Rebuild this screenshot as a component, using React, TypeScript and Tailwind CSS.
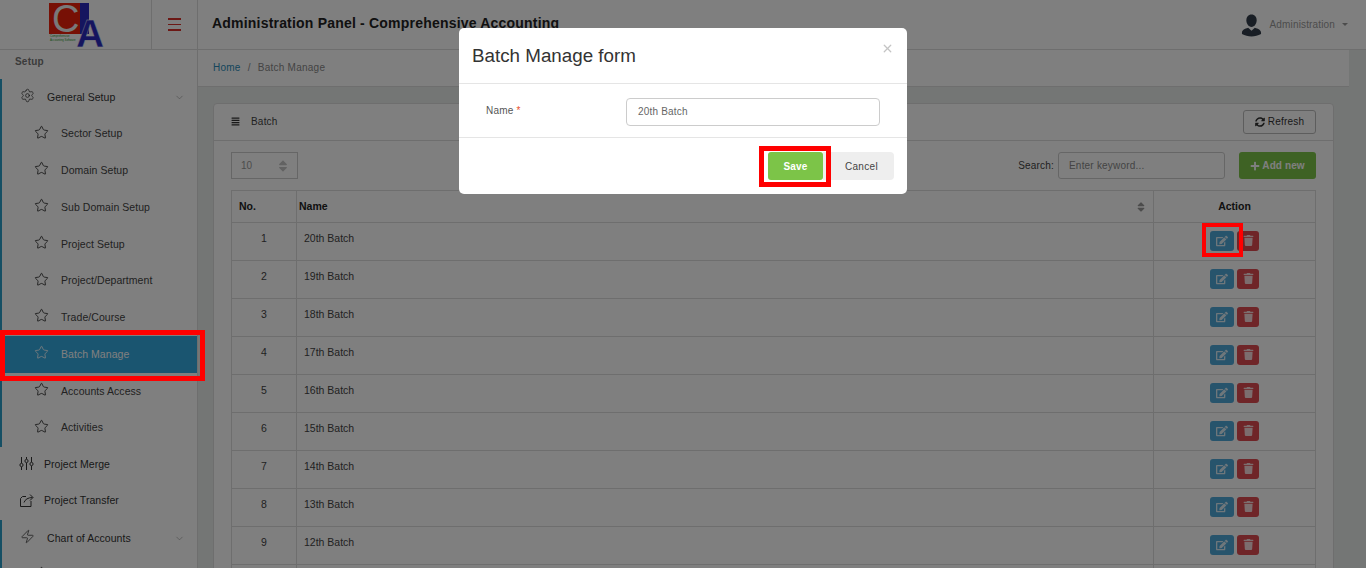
import { ChevronDown, Settings, Star, Zap, X } from "lucide-react";
import { FaAlignJustify, FaEdit, FaPlus, FaSort, FaSyncAlt, FaTrash } from "react-icons/fa";

const subItems = ["Sector Setup", "Domain Setup", "Sub Domain Setup", "Project Setup", "Project/Department", "Trade/Course", "Batch Manage", "Accounts Access", "Activities"];
const batches = ["20th Batch", "19th Batch", "18th Batch", "17th Batch", "16th Batch", "15th Batch", "14th Batch", "13th Batch", "12th Batch", "11th Batch"];

function Logo() {
  return (
    <svg width="60" height="49" viewBox="0 0 60 49" className="block">
      <rect x="1" y="3" width="31" height="31" fill="#ef200a" />
      <rect x="32" y="3" width="9" height="31" fill="#2b2bbf" />
      <text x="4" y="32" fontSize="38" fontFamily="Liberation Sans" fill="#f2f2f2">C</text>
      <text x="28" y="47" fontSize="39" fontFamily="Liberation Sans" fontWeight="700" fill="#2b2bbf" stroke="#fff" strokeWidth="0.4">A</text>
      <text x="2" y="37" fontSize="2.8" fontFamily="Liberation Sans" fill="#2a9a2a">Comprehensive</text>
      <text x="2" y="41" fontSize="2.8" fontFamily="Liberation Sans" fill="#2a9a2a">Accounting Software</text>
    </svg>
  );
}

function NavStar({ label, active }: { label: string; active?: boolean }) {
  return (
    <div className={"flex h-[36.75px] items-center pl-[29px] " + (active ? "ml-[3px] bg-[#34aae0] text-white" : "ml-[3px] text-[#444]")}>
      <Star size={15} strokeWidth={1.3} className={"mb-[4px] shrink-0 " + (active ? "text-white" : "text-[#222]")} />
      <span className="ml-[12px] text-[10.5px] tracking-[0.05px]">{label}</span>
    </div>
  );
}

export default function App() {
  return (
    <div className="relative h-[568px] overflow-hidden bg-[#e8ecea] text-[#333] [font-family:'Liberation_Sans',Arial,sans-serif]">
      {/* top bar */}
      <header className="flex h-[50px] border-b border-[#dcdcdc] bg-white">
        <div className="flex w-[152px] shrink-0 justify-end border-r border-[#dcdcdc] pr-[43px]">
          <Logo />
        </div>
        <div className="flex w-[46px] shrink-0 flex-col items-center justify-center gap-[4px] border-r border-[#dcdcdc]">
          <span className="h-[1.5px] w-[13px] bg-[#d8302a]" />
          <span className="h-[1.5px] w-[13px] bg-[#d8302a]" />
          <span className="h-[1.5px] w-[13px] bg-[#d8302a]" />
        </div>
        <div className="flex flex-1 items-center pl-[14px] pb-[2px] text-[14px] font-bold tracking-[0.2px] text-[#222]">
          Administration Panel - Comprehensive Accounting
        </div>
        <div className="flex items-center pr-[18px]">
          <svg width="21" height="24" viewBox="0 0 22 24" className="mr-[8px]">
            <path d="M11 1c3.4 0 5.4 2.600 5.4 6s-2.200 7-5.400 7-5.400-3.600-5.400-7 2-6 5.400-6z" fill="#333d4a" />
            <path d="M1 20c0-3 3-4 6.500-5.200L11 18l3.500-3.200C18 16 21 17 21 20v1.500C18 23.300 14.500 24 11 24S4 23.300 1 21.500z" fill="#333d4a" />
          </svg>
          <span className="text-[10px] tracking-[0.15px] text-[#999]">Administration</span>
          <span className="ml-[7px] h-0 w-0 border-x-[3px] border-t-[3px] border-x-transparent border-t-[#999]" />
        </div>
      </header>

      <div className="flex">
        {/* sidebar */}
        <aside className="h-[518px] w-[198px] shrink-0 overflow-hidden border-r border-[#dcdcdc] bg-white">
          <div className="h-[29px] pl-[15px] pt-[4px] text-[10px] font-bold tracking-[0.2px] text-[#777]">Setup</div>
          <div className="border-l-2 border-[#2a9fc9]">
            <div className="flex h-[36.75px] items-center pl-[18px] text-[#333]">
              <Settings size={15} strokeWidth={1.2} className="mb-[3px] shrink-0" />
              <span className="ml-[12px] flex-1 text-[10.5px] tracking-[0.05px]">General Setup</span>
              <ChevronDown size={11} strokeWidth={1.2} className="mr-[12px] text-[#888]" />
            </div>
            {subItems.map((s) => (
              <NavStar key={s} label={s} active={s === "Batch Manage"} />
            ))}
          </div>
          <div className="flex h-[36.75px] items-center pl-[19px] text-[#333]">
            <svg width="15" height="15" viewBox="0 0 15 15" fill="none" stroke="currentColor" strokeWidth="1" className="mb-[3px] shrink-0">
              <path d="M2.500 1v6M2.500 11v3M7.500 1v2M7.500 7v7M12.500 1v5M12.500 10v4" />
              <circle cx="2.500" cy="9" r="1.600" />
              <circle cx="7.500" cy="5" r="1.600" />
              <circle cx="12.500" cy="8" r="1.600" />
            </svg>
            <span className="ml-[10px] text-[10.5px] tracking-[0.05px]">Project Merge</span>
          </div>
          <div className="flex h-[36.75px] items-center pb-[1px] pl-[19px] text-[#333]">
            <svg width="15" height="15" viewBox="0 0 15 15" fill="none" stroke="currentColor" strokeWidth="1" className="mb-[2px] shrink-0">
              <path d="M7 3.500H3.500L1.500 5.500v8h10.500V8" />
              <path d="M5 9.500C6 6.500 9 4.500 13.500 4.500M11 1.500l3 3-3 3" />
            </svg>
            <span className="ml-[10px] text-[10.5px] tracking-[0.05px]">Project Transfer</span>
          </div>
          <div className="border-l-2 border-[#2a9fc9]">
            <div className="flex h-[36.75px] items-center pl-[18px] text-[#333]">
              <Zap size={15} strokeWidth={1.2} className="mb-[3px] shrink-0" />
              <span className="ml-[12px] flex-1 text-[10.5px] tracking-[0.05px]">Chart of Accounts</span>
              <ChevronDown size={11} strokeWidth={1.2} className="mr-[12px] text-[#888]" />
            </div>
            <NavStar label="Account Group" />
          </div>
        </aside>

        {/* main */}
        <main className="flex-1 pr-[17px]">
          <div className="flex h-[37px] items-center border-b border-[#dcdcdc] bg-white pb-[2px] pl-[15px] text-[10px] tracking-[0.25px] text-[#888]">
            <span className="text-[#2a8bb8]">Home</span>
            <span className="mx-[7px]">/</span>
            <span>Batch Manage</span>
          </div>
          <section className="mx-[15px] mt-[16px] rounded-t-[4px] border border-[#dcdcdc] bg-white">
            <div className="flex h-[37px] items-center justify-between border-b border-[#dcdcdc] pb-[1px] pl-[17px] pr-[17px]">
              <div className="flex items-center text-[10px] tracking-[0.2px] text-[#444]">
                <FaAlignJustify size={9} className="text-[#333]" />
                <span className="ml-[11px]">Batch</span>
              </div>
              <button className="flex h-[24px] w-[73px] items-center justify-center gap-[3px] rounded-[3px] border border-[#bbb] text-[10px] tracking-[0.2px] text-[#333]">
                <FaSyncAlt size={10} />
                Refresh
              </button>
            </div>
            <div className="px-[17px]">
              <div className="flex h-[49px] items-center justify-between">
                <div className="flex h-[27px] w-[67px] items-center justify-between border border-[#ccc] pl-[9px] pr-[7px] text-[10px] text-[#999]">
                  10
                  <FaSort size={14} className="text-[#c4c4c4]" />
                </div>
                <div className="flex items-center">
                  <span className="mr-[4px] text-[10px] tracking-[0.2px] text-[#444]">Search:</span>
                  <div className="flex h-[27px] w-[167px] items-center rounded-[3px] border border-[#ccc] pl-[10px] text-[10px] tracking-[0.2px] text-[#888]">Enter keyword...</div>
                  <button className="ml-[14px] flex h-[27px] w-[77px] items-center justify-center gap-[2px] rounded-[3px] bg-[#7cc448] text-[10px] font-bold tracking-[0.1px] text-white">
                    <FaPlus size={10} />
                    Add new
                  </button>
                </div>
              </div>
              <table className="w-full table-fixed border-collapse text-[10.5px] text-[#444]">
                <thead>
                  <tr className="h-[32px] text-[#222]">
                    <th className="w-[65px] border border-[#ddd] pl-[7px] text-left font-bold">No.</th>
                    <th className="border border-[#ddd] pl-[2px] text-left font-bold">
                      <div className="flex items-center justify-between pr-[6px]">
                        Name
                        <FaSort size={12} className="text-[#999]" />
                      </div>
                    </th>
                    <th className="w-[162px] border border-[#ddd] text-center font-bold">Action</th>
                  </tr>
                </thead>
                <tbody>
                  {batches.map((b, i) => (
                    <tr key={b} className="h-[38px]">
                      <td className="border border-[#ddd] pb-[6px] text-center">{i + 1}</td>
                      <td className="border border-[#ddd] pb-[6px] pl-[7px]">{b}</td>
                      <td className="border border-[#ddd] pb-[2px]">
                        <div className="flex items-center justify-center gap-[3px]">
                          <span className="flex h-[20px] w-[24px] items-center justify-center rounded-[3px] bg-[#4fa8d8] text-white/80">
                            <FaEdit size={12} />
                          </span>
                          <span className="flex h-[20px] w-[22px] items-center justify-center rounded-[3px] bg-[#de4a50] text-white/80">
                            <FaTrash size={11} />
                          </span>
                        </div>
                      </td>
                    </tr>
                  ))}
                </tbody>
              </table>
            </div>
          </section>
        </main>
      </div>

      {/* modal backdrop */}
      <div className="absolute inset-0 bg-black/50" />

      {/* modal */}
      <div className="absolute left-[459px] top-[28px] w-[448px] rounded-[5px] bg-white">
        <div className="relative flex h-[56px] items-center border-b border-[#e5e5e5] pl-[13px] pt-[1px]">
          <h4 className="text-[18.8px] text-[#333]">Batch Manage form</h4>
          <X size={13} strokeWidth={2.4} className="absolute right-[13px] top-[14px] text-[#c4c4c4]" />
        </div>
        <div className="flex h-[54px] items-center border-b border-[#e5e5e5] pl-[27px] pt-[2px]">
          <label className="w-[140px] pb-[3px] text-[10px] tracking-[0.2px] text-[#555]">
            Name <span className="text-[#e8502a]">*</span>
          </label>
          <div className="flex h-[28px] w-[254px] items-center rounded-[4px] border border-[#ccc] pl-[11px] text-[10px] tracking-[0.2px] text-[#666]">20th Batch</div>
        </div>
        <div className="flex h-[56px] items-center justify-end pr-[13px]">
          <button className="h-[28px] w-[55px] rounded-[3px] bg-[#7cc448] text-[10px] font-bold tracking-[0.2px] text-white">Save</button>
          <button className="h-[28px] w-[71px] rounded-r-[4px] bg-[#eeeeee] pl-[6px] text-[10px] tracking-[0.35px] text-[#444]">Cancel</button>
        </div>
      </div>

      {/* red annotation boxes */}
      <div className="absolute left-0 top-[330px] h-[51px] w-[205px] border-[5px] border-[#ff0000]" />
      <div className="absolute left-[759px] top-[146px] h-[41px] w-[72px] border-[5px] border-[#ff0000]" />
      <div className="absolute left-[1202px] top-[223px] h-[34px] w-[41px] border-[4px] border-[#ff0000]" />
    </div>
  );
}
